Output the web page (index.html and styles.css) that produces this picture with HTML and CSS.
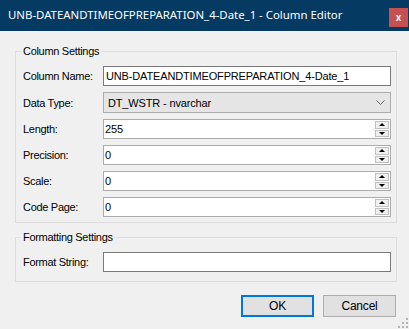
FILE: index.html
```html
<!DOCTYPE html>
<html lang="en">
<head>
  <meta charset="UTF-8">
  <meta name="viewport" content="width=device-width, initial-scale=1.0">
  <title>Column Editor</title>
  <link rel="stylesheet" href="styles.css">
</head>
<body>
  <div class="window">
    <div class="titlebar">
      <span class="title">UNB-DATEANDTIMEOFPREPARATION_4-Date_1 - Column Editor</span>
      <button class="close">x</button>
    </div>

    <div class="content">
      <fieldset class="group">
        <legend>Column Settings</legend>
        <div class="form-grid">
          <label>Column Name:</label>
          <input type="text" class="field" value="UNB-DATEANDTIMEOFPREPARATION_4-Date_1">

          <label>Data Type:</label>
          <div class="combo">
            <span>DT_WSTR - nvarchar</span>
            <svg class="chevron" width="9" height="5" viewBox="0 0 9 5">
              <polyline points="0.5,0.5 4.5,4.5 8.5,0.5" fill="none" stroke="#606060" stroke-width="1"/>
            </svg>
          </div>

          <label>Length:</label>
          <div class="spin">
            <input type="text" value="255">
            <div class="spin-btns"><span class="up"></span><span class="down"></span></div>
          </div>

          <label>Precision:</label>
          <div class="spin">
            <input type="text" value="0">
            <div class="spin-btns"><span class="up"></span><span class="down"></span></div>
          </div>

          <label>Scale:</label>
          <div class="spin">
            <input type="text" value="0">
            <div class="spin-btns"><span class="up"></span><span class="down"></span></div>
          </div>

          <label>Code Page:</label>
          <div class="spin">
            <input type="text" value="0">
            <div class="spin-btns"><span class="up"></span><span class="down"></span></div>
          </div>
        </div>
      </fieldset>

      <fieldset class="group second">
        <legend>Formatting Settings</legend>
        <div class="form-grid">
          <label>Format String:</label>
          <input type="text" class="field" value="">
        </div>
      </fieldset>

      <div class="buttons">
        <button class="btn default">OK</button>
        <button class="btn">Cancel</button>
      </div>
    </div>

    <!-- size grip -->
    <svg class="grip" width="10" height="10" viewBox="0 0 10 10">
      <rect x="8" y="0" width="2" height="2" fill="#b4b4b4"/>
      <rect x="4" y="4" width="2" height="2" fill="#b4b4b4"/>
      <rect x="8" y="4" width="2" height="2" fill="#b4b4b4"/>
      <rect x="0" y="8" width="2" height="2" fill="#b4b4b4"/>
      <rect x="4" y="8" width="2" height="2" fill="#b4b4b4"/>
      <rect x="8" y="8" width="2" height="2" fill="#b4b4b4"/>
    </svg>
  </div>
</body>
</html>
```

FILE: styles.css
```css
:root {
  --title-bg: #053a62;
  --window-bg: #f0f0f0;
  --group-border: #dcdcdc;
  --field-border: #7a7a7a;
  --spin-border: #acacac;
  --accent: #0078d7;
}

* {
  margin: 0;
  padding: 0;
  box-sizing: border-box;
}

body {
  font-family: 'Liberation Sans', Arial, sans-serif;
  font-size: 11px;
  letter-spacing: -0.3px;
  color: #000;
  background-color: var(--window-bg);
}

.window {
  position: relative;
  width: 409px;
  height: 329px;
  background-color: var(--window-bg);
  display: flex;
  flex-direction: column;
}

.titlebar {
  height: 31px;
  background-color: var(--title-bg);
  color: white;
  display: flex;
  align-items: flex-start;
}

.title {
  margin: 7px 0 0 8px;
  font-family: 'Noto Sans', sans-serif;
  font-size: 11.4px;
  letter-spacing: 0;
  line-height: 16px;
  white-space: nowrap;
}

.close {
  margin: 8px 1px 0 auto;
  width: 19px;
  height: 19px;
  border: none;
  background-color: #c75050;
  color: white;
  font-family: 'Liberation Sans', sans-serif;
  font-weight: bold;
  font-size: 10px;
  letter-spacing: 0;
  line-height: 17px;
}

.content {
  padding: 12px 12px 0 15px;
}

.group {
  border: 1px solid var(--group-border);
  padding: 7px 5px 5px 7px;
}

.group legend {
  margin-left: -2px;
  padding: 0 2px;
  line-height: 16px;
  white-space: nowrap;
}

.group.second {
  margin-top: 6px;
  padding: 7px 5px 9px 7px;
}

.form-grid {
  display: grid;
  grid-template-columns: 80px 1fr;
  row-gap: 6px;
  align-items: center;
}

.form-grid label {
  line-height: 16px;
  white-space: nowrap;
}

input[type="text"] {
  font-family: 'Liberation Sans', sans-serif;
  font-size: 11px;
  letter-spacing: -0.15px;
  color: #000;
  outline: none;
}

.field {
  height: 20px;
  border: 1px solid var(--field-border);
  background: white;
  padding: 0 2px;
}

.combo {
  height: 21px;
  border: 1px solid var(--spin-border);
  background-color: #e5e5e5;
  display: flex;
  align-items: center;
  justify-content: space-between;
  padding: 0 5px 0 4px;
  letter-spacing: -0.15px;
}

.spin {
  height: 20px;
  border: 1px solid var(--spin-border);
  background: white;
  display: flex;
}

.spin input {
  flex: 1;
  min-width: 0;
  border: none;
  padding: 0 1px;
  background: transparent;
}

.spin-btns {
  width: 14px;
  margin: 1px 1px 1px 0;
  display: flex;
  flex-direction: column;
  gap: 1px;
}

.spin-btns span {
  flex: 1;
  border: 1px solid #c0c0c0;
  background-color: #f0f0f0;
  display: flex;
  align-items: center;
  justify-content: center;
}

.spin-btns .up::before,
.spin-btns .down::before {
  content: "";
  width: 0;
  height: 0;
  border-left: 3px solid transparent;
  border-right: 3px solid transparent;
}

.spin-btns .up::before {
  border-bottom: 3px solid #000;
}

.spin-btns .down::before {
  border-top: 3px solid #000;
}

.buttons {
  display: flex;
  justify-content: flex-end;
  gap: 9px;
  margin-top: 13px;
  padding-right: 1px;
}

.btn {
  width: 73px;
  height: 22px;
  background-color: #e1e1e1;
  border: 1px solid #adadad;
  font-family: inherit;
  font-size: 12px;
  letter-spacing: -0.2px;
  color: #000;
}

.btn.default {
  border: 2px solid var(--accent);
}

.grip {
  position: absolute;
  right: 1px;
  bottom: 1px;
}
```
